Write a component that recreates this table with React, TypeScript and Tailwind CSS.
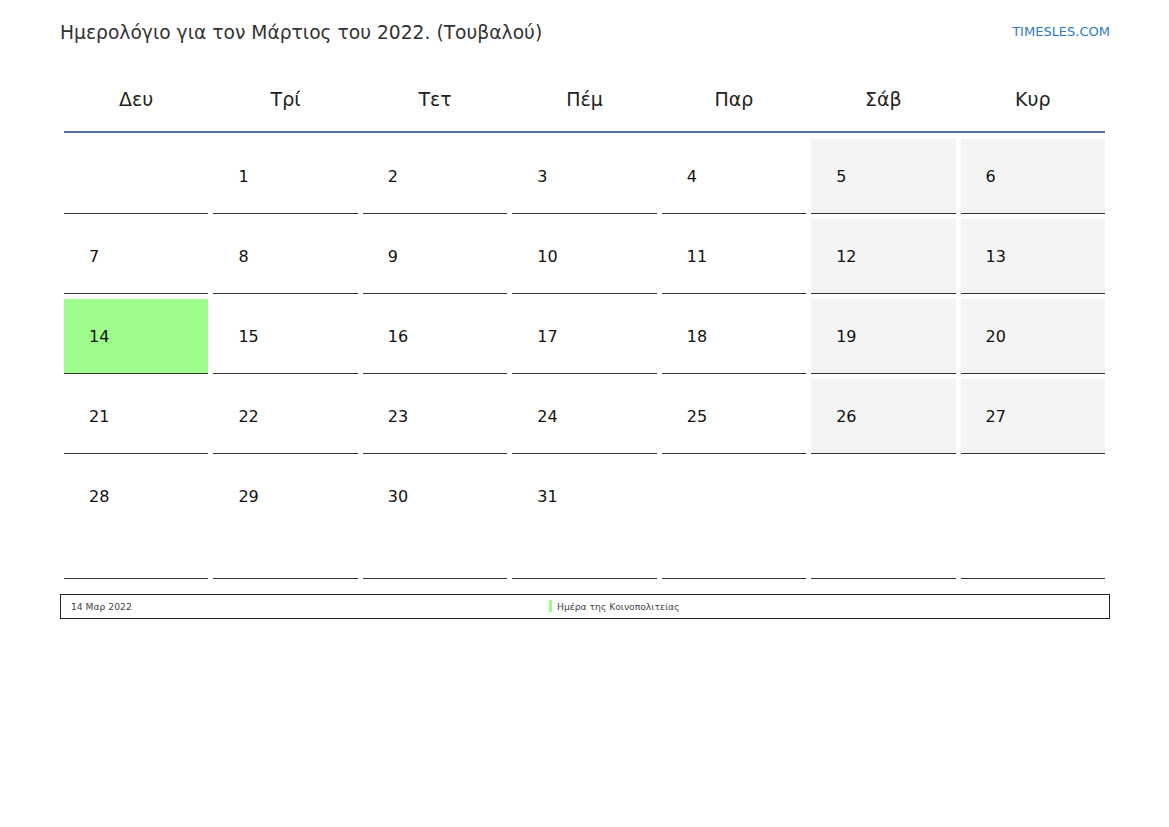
import React from "react";

const days = ["Δευ", "Τρί", "Τετ", "Πέμ", "Παρ", "Σάβ", "Κυρ"];

// March 2022 starts on Tuesday
const weeks: (number | null)[][] = [
  [null, 1, 2, 3, 4, 5, 6],
  [7, 8, 9, 10, 11, 12, 13],
  [14, 15, 16, 17, 18, 19, 20],
  [21, 22, 23, 24, 25, 26, 27],
  [28, 29, 30, 31, null, null, null],
];

const holiday = 14;

const App = () => {
  return (
    <div className="w-[1169px] h-[827px] bg-white font-['DejaVu_Sans',sans-serif] text-[#222]">
      <div className="pl-[60px] pr-[59px] pt-[20px]">
        {/* Title bar */}
        <div className="flex items-center justify-between h-[26px]">
          <h1 className="text-[18.7px] leading-[26px] text-[#333]">
            Ημερολόγιο για τον Μάρτιος του 2022. (Τουβαλού)
          </h1>
          <a href="#" className="text-[13px] text-[#2b7bc4] -mt-[2px]">
            TIMESLES.COM
          </a>
        </div>

        {/* Calendar */}
        <div className="ml-[4px] w-[1041px] mt-[22px]">
          <div className="grid grid-cols-7 gap-x-[5px] h-[65px] border-b-2 border-[#4f6f9c]">
            {days.map((d) => (
              <div key={d} className="flex items-center justify-center text-[19px] text-[#222]">
                {d}
              </div>
            ))}
          </div>

          <div className="flex flex-col gap-y-[5px] pt-[6px]">
            {weeks.map((week, i) => (
              <div key={i} className="grid grid-cols-7 gap-x-[5px]">
                {week.map((day, j) => {
                  const weekend = j >= 5;
                  const isHoliday = day === holiday;
                  const bg = isHoliday
                    ? "bg-[#9efc8c]"
                    : weekend && day !== null
                    ? "bg-[#f4f4f4]"
                    : "bg-white";
                  return (
                    <div
                      key={j}
                      className={`${bg} border-b border-[#333] pl-[25px] pt-[28px] text-[16px] leading-[20px] text-[#111] ${
                        i === weeks.length - 1 ? "h-[120px]" : "h-[75px]"
                      }`}
                    >
                      {day}
                    </div>
                  );
                })}
              </div>
            ))}
          </div>
        </div>

        {/* Legend */}
        <div className="mt-[15px] flex items-center h-[25px] border border-[#222] text-[9.2px] text-[#444]">
          <div className="w-[488px] pl-[10px]">14 Μαρ 2022</div>
          <div className="flex items-center gap-[5px]">
            <span className="inline-block w-[3px] h-[12px] bg-[#9efc8c]" />
            <span>Ημέρα της Κοινοπολιτείας</span>
          </div>
        </div>
      </div>
    </div>
  );
};

export default App;
